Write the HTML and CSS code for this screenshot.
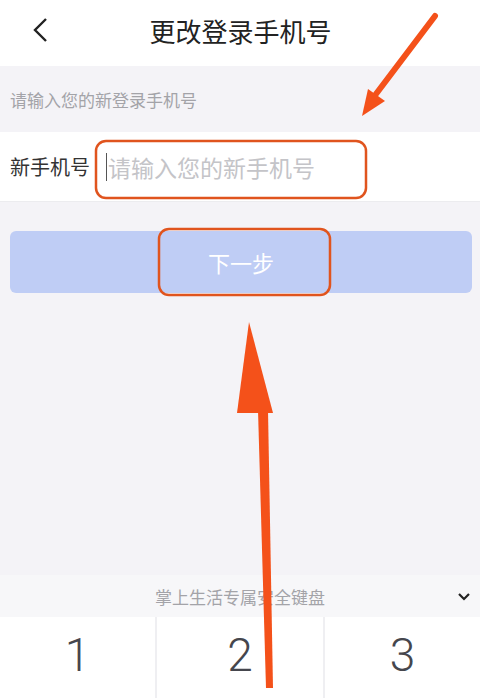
FILE: index.html
```html
<!DOCTYPE html>
<html lang="zh-CN">

<head>
    <meta charset="UTF-8">
    <meta name="viewport" content="width=device-width, initial-scale=1.0">
    <title>更改登录手机号</title>
    <link rel="stylesheet" href="styles.css">
</head>

<body>
    <div class="page">
        <div class="top">
            <svg class="back" width="20" height="26" viewBox="0 0 20 26">
                <path d="M15 2 L4 13 L15 24" fill="none" stroke="#222" stroke-width="2.4" />
            </svg>
            <div class="title">更改登录手机号</div>
        </div>
        <div class="tip">请输入您的新登录手机号</div>
        <div class="row">
            <span class="label">新手机号</span>
            <span class="cursor"></span>
            <span class="ph">请输入您的新手机号</span>
        </div>
        <div class="btn">下一步</div>

        <div class="kb">
            <div class="kb-bar">
                <span>掌上生活专属安全键盘</span>
                <svg class="down" width="14" height="10" viewBox="0 0 14 10">
                    <path d="M2 2 L7 7 L12 2" fill="none" stroke="#222" stroke-width="2.2" />
                </svg>
            </div>
            <div class="keys">
                <div class="key">1</div>
                <div class="key mid">2</div>
                <div class="key">3</div>
            </div>
        </div>
    </div>

    <!-- 标注：红框和箭头 -->
    <svg class="marks" width="480" height="698" viewBox="0 0 480 698">
        <rect x="96" y="141" width="270" height="57" rx="10" fill="none" stroke="#e0541e" stroke-width="2.5" />
        <rect x="159" y="229" width="171" height="66" rx="10" fill="none" stroke="#e0541e" stroke-width="2.5" />
        <line x1="435" y1="16" x2="376" y2="94" stroke="#f4511a" stroke-width="6" stroke-linecap="round" />
        <polygon points="362,116 368,89 385,101" fill="#f4511a" />
        <polygon points="258,410 268,410 273,688 266,688" fill="#f4511a" />
        <polygon points="249,322 237,413 273,413" fill="#f4511a" />
    </svg>
</body>

</html>
```

FILE: styles.css
```css
* {
    padding: 0;
    margin: 0;
    box-sizing: border-box;
}

body {
    width: 480px;
    height: 698px;
    overflow: hidden;
    position: relative;
    background-color: #f4f3f7;
    font-family: "Noto Sans CJK SC", "Noto Sans", sans-serif;
}

.page {
    height: 698px;
    display: flex;
    flex-direction: column;
}

.top {
    height: 66px;
    background: #fff;
    display: flex;
    align-items: center;
    justify-content: center;
    position: relative;
}

.back {
    position: absolute;
    left: 31px;
    top: 17px;
}

.title {
    font-size: 26px;
    color: #222;
    margin-top: -5px;
    margin-left: 1px;
}

.tip {
    height: 66px;
    padding-left: 10px;
    display: flex;
    align-items: center;
    font-size: 17px;
    color: #a3a3a8;
}

.row {
    height: 70px;
    background: #fff;
    display: flex;
    align-items: center;
    padding-left: 10px;
    border-bottom: 1px solid #ececef;
}

.label {
    font-size: 20px;
    color: #333;
    width: 96px;
}

.cursor {
    width: 1px;
    height: 28px;
    background: #555;
    margin-right: 1px;
}

.ph {
    font-size: 23px;
    color: #c4c4c8;
}

.btn {
    margin: 29px 8px 0 10px;
    height: 62px;
    border-radius: 6px;
    background: #bfcdf5;
    color: #fff;
    font-size: 22px;
    display: flex;
    align-items: center;
    justify-content: center;
}

.kb {
    margin-top: auto;
    height: 123px;
    background: #f7f7f9;
}

.kb-bar {
    height: 42px;
    display: flex;
    align-items: center;
    justify-content: center;
    position: relative;
    font-size: 17px;
    color: #a3a3a8;
}

.down {
    position: absolute;
    right: 9px;
    top: 17px;
}

.keys {
    display: flex;
    gap: 2px;
    background: #efeff2;
    height: 81px;
}

.key {
    width: 155px;
    background: #fff;
    display: flex;
    align-items: center;
    justify-content: center;
    font-family: "Roboto", "Liberation Sans", sans-serif;
    font-weight: 300;
    font-size: 46px;
    color: #45464d;
    padding-bottom: 6px;
}

.key.mid {
    flex: 1;
}

.marks {
    position: absolute;
    left: 0;
    top: 0;
    pointer-events: none;
}
```
